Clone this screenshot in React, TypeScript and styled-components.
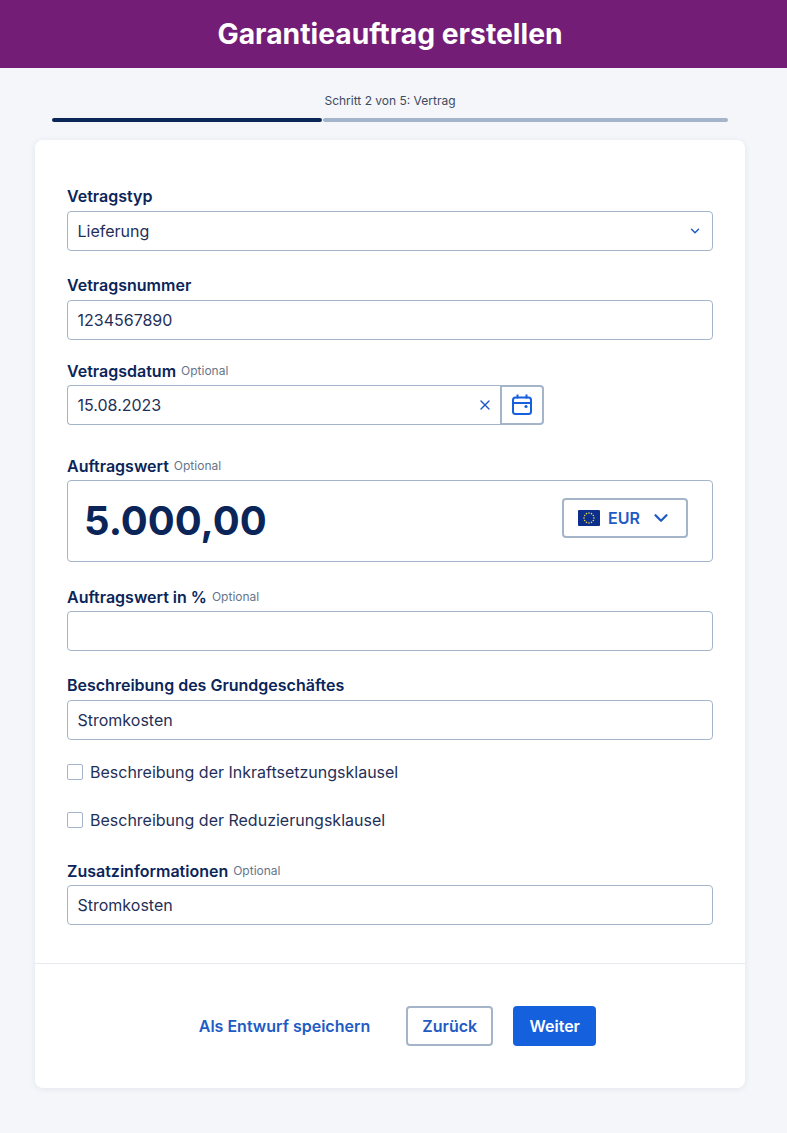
import { createGlobalStyle, styled } from "styled-components";
import { ChevronDown, X } from "lucide-react";

const GlobalStyle = createGlobalStyle`
  html, body {
    margin: 0;
    padding: 0;
    background: #f4f6fa;
    font-family: Inter, "Liberation Sans", sans-serif;
    color: #0b2559;
  }
  * { box-sizing: border-box; }
`;

const Header = styled.header`
  height: 68px;
  padding-right: 7px;
  background: #741d76;
  display: flex;
  align-items: center;
  justify-content: center;
`;

const Title = styled.h1`
  margin: 0;
  font-size: 28.25px;
  line-height: 34px;
  font-weight: 700;
  color: #fff;
`;

const Page = styled.main`
  padding: 0 42px 45px 35px;
`;

const Progress = styled.div`
  padding: 25px 17px 18px;
`;

const ProgressLabel = styled.div`
  font-size: 12px;
  line-height: 16px;
  text-align: center;
  color: #3f4a5f;
  margin-bottom: 9px;
`;

const ProgressTrack = styled.div`
  display: flex;
  gap: 1px;
  height: 4px;
`;

const ProgressPart = styled.div<{ $done?: boolean; $grow: number }>`
  flex: ${(p) => p.$grow};
  background: ${(p) => (p.$done ? "#0b2559" : "#a4b5c9")};
  border-radius: 2px;
`;

const Card = styled.section`
  background: #fff;
  border-radius: 8px;
  box-shadow: 0 1px 6px rgba(20, 40, 80, 0.08);
`;

const Form = styled.form`
  padding: 44px 32px 38px;
  display: flex;
  flex-direction: column;
`;

const Group = styled.div<{ $top?: number }>`
  margin-top: ${(p) => p.$top ?? 0}px;
`;

const LabelRow = styled.label<{ $gap?: number }>`
  display: flex;
  align-items: center;
  gap: 5px;
  height: 24px;
  line-height: 24px;
  margin-bottom: ${(p) => p.$gap ?? 3}px;
  font-size: 16px;
  font-weight: 600;
  color: #0b2559;
`;

const Optional = styled.span`
  font-size: 12px;
  font-weight: 400;
  color: #66758c;
`;

const Field = styled.div`
  height: 40px;
  padding: 0 10px 0 9.5px;
  display: flex;
  align-items: center;
  justify-content: space-between;
  background: #fff;
  border: 1px solid #a4b5c9;
  border-radius: 4px;
  font-size: 16px;
  color: #1f3058;
`;

const DateRow = styled.div`
  display: flex;
  width: 477px;
  height: 40px;
`;

const DateField = styled(Field)`
  flex: 1;
  border-right: 0;
  border-radius: 4px 0 0 4px;
  padding-right: 7px;
`;

const CalendarButton = styled.button`
  width: 44px;
  padding: 0;
  display: flex;
  align-items: center;
  justify-content: center;
  background: #fff;
  border: 2px solid #a4b5c9;
  border-radius: 0 4px 4px 0;
  color: #1560dc;
`;

const AmountBox = styled.div`
  height: 82px;
  padding: 0 24px 0 16px;
  display: flex;
  align-items: center;
  justify-content: space-between;
  border: 1px solid #a4b5c9;
  border-radius: 4px;
`;

const Amount = styled.div`
  font-size: 40px;
  line-height: 48px;
  font-weight: 700;
  color: #0b2559;
`;

const CurrencyButton = styled.button`
  width: 126px;
  height: 40px;
  margin-bottom: 6px;
  padding: 0 14px;
  display: flex;
  align-items: center;
  background: #fff;
  border: 2px solid #a4b5c9;
  border-radius: 4px;
  font-family: inherit;
  font-size: 16px;
  font-weight: 600;
  color: #1f5bc4;
`;

const CurrencyCode = styled.span`
  margin-left: 8px;
  margin-right: auto;
`;

const CheckRow = styled.label<{ $top: number }>`
  display: flex;
  align-items: center;
  gap: 7px;
  height: 24px;
  margin-top: ${(p) => p.$top}px;
  font-size: 16px;
  color: #1f3058;
`;

const CheckBox = styled.span`
  width: 16px;
  height: 16px;
  border: 1px solid #a4b5c9;
  border-radius: 2px;
  background: #fff;
`;

const Footer = styled.footer`
  height: 125px;
  border-top: 1px solid #e6e9ee;
  display: flex;
  align-items: center;
  justify-content: center;
  padding-left: 15px;
`;

const LinkButton = styled.a`
  font-size: 16px;
  font-weight: 600;
  color: #1f5bc4;
  margin-right: 36px;
`;

const Secondary = styled.button`
  width: 87px;
  height: 40px;
  background: #fff;
  border: 2px solid #a4b5c9;
  border-radius: 4px;
  font-family: inherit;
  font-size: 16px;
  font-weight: 600;
  color: #1f5bc4;
  margin-right: 20px;
`;

const Primary = styled.button`
  width: 83px;
  height: 40px;
  background: #1560dc;
  border: 0;
  border-radius: 4px;
  font-family: inherit;
  font-size: 16px;
  font-weight: 600;
  color: #fff;
`;

const CalendarIcon = () => (
  <svg width="22" height="22" viewBox="0 0 22 22" fill="none" stroke="currentColor" strokeWidth="2">
    <rect x="2" y="3.5" width="18" height="16.5" rx="2.5" />
    <path d="M2 9h18M6.5 0.5v4M15.5 0.5v4" />
    <circle cx="15" cy="12.5" r="1.6" fill="currentColor" stroke="none" />
  </svg>
);

const stars = Array.from({ length: 12 }, (_, i) => {
  const a = (i * Math.PI) / 6;
  return { x: 11 + 5 * Math.cos(a), y: 8 + 5 * Math.sin(a) };
});

const EuFlag = () => (
  <svg width="22" height="16" viewBox="0 0 22 16">
    <rect width="22" height="16" rx="1" fill="#0b2f8a" />
    {stars.map((s) => (
      <circle key={`${s.x}-${s.y}`} cx={s.x} cy={s.y} r="0.8" fill="#e8d44a" />
    ))}
  </svg>
);

export default function App() {
  return (
    <>
      <GlobalStyle />
      <Header>
        <Title>Garantieauftrag erstellen</Title>
      </Header>
      <Page>
        <Progress>
          <ProgressLabel>Schritt 2 von 5: Vertrag</ProgressLabel>
          <ProgressTrack>
            <ProgressPart $done $grow={270} />
            <ProgressPart $grow={405} />
          </ProgressTrack>
        </Progress>
        <Card>
          <Form>
            <Group>
              <LabelRow>Vetragstyp</LabelRow>
              <Field>
                Lieferung
                <ChevronDown size={14} color="#1f5bc4" strokeWidth={2.5} />
              </Field>
            </Group>
            <Group $top={22}>
              <LabelRow>Vetragsnummer</LabelRow>
              <Field>1234567890</Field>
            </Group>
            <Group $top={19}>
              <LabelRow $gap={2}>
                Vetragsdatum <Optional>Optional</Optional>
              </LabelRow>
              <DateRow>
                <DateField>
                  15.08.2023
                  <X size={16} color="#1f5bc4" strokeWidth={2} />
                </DateField>
                <CalendarButton type="button">
                  <CalendarIcon />
                </CalendarButton>
              </DateRow>
            </Group>
            <Group $top={29}>
              <LabelRow $gap={2}>
                Auftragswert <Optional>Optional</Optional>
              </LabelRow>
              <AmountBox>
                <Amount>5.000,00</Amount>
                <CurrencyButton type="button">
                  <EuFlag />
                  <CurrencyCode>EUR</CurrencyCode>
                  <ChevronDown size={22} strokeWidth={2.5} />
                </CurrencyButton>
              </AmountBox>
            </Group>
            <Group $top={23}>
              <LabelRow $gap={2}>
                Auftragswert in % <Optional>Optional</Optional>
              </LabelRow>
              <Field />
            </Group>
            <Group $top={22}>
              <LabelRow>Beschreibung des Grundgeschäftes</LabelRow>
              <Field>Stromkosten</Field>
            </Group>
            <CheckRow $top={20}>
              <CheckBox />
              Beschreibung der Inkraftsetzungsklausel
            </CheckRow>
            <CheckRow $top={24}>
              <CheckBox />
              Beschreibung der Reduzierungsklausel
            </CheckRow>
            <Group $top={27}>
              <LabelRow $gap={2}>
                Zusatzinformationen <Optional>Optional</Optional>
              </LabelRow>
              <Field>Stromkosten</Field>
            </Group>
          </Form>
          <Footer>
            <LinkButton>Als Entwurf speichern</LinkButton>
            <Secondary type="button">Zurück</Secondary>
            <Primary type="button">Weiter</Primary>
          </Footer>
        </Card>
      </Page>
    </>
  );
}
